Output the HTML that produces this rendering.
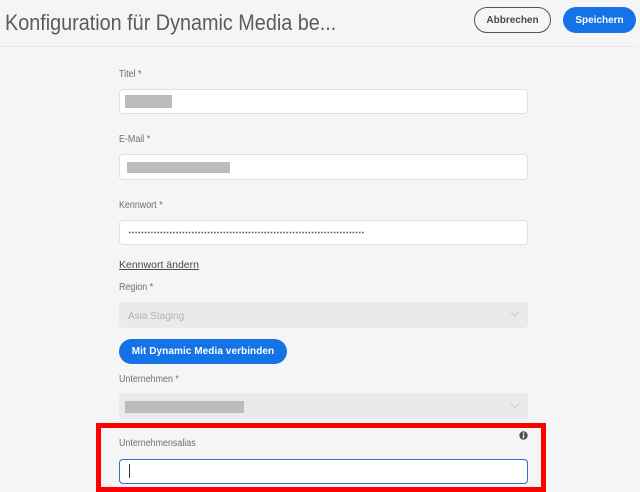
<!DOCTYPE html>
<html lang="de">
<head>
<meta charset="utf-8">
<title>Konfiguration</title>
<style>
html,body{margin:0;padding:0;width:640px;height:492px;overflow:hidden;background:#f5f5f5;font-family:"Liberation Sans",sans-serif;}
div,a,span{position:absolute;box-sizing:border-box;white-space:nowrap;}
.title{left:5px;top:8px;font-size:22.5px;line-height:30px;color:#5c5c5c;transform:scaleX(.88);transform-origin:left center;}
.hr{left:0;top:46px;width:636px;height:1px;background:#e8e8e8;}
.btn{border-radius:13px;font-size:10px;font-weight:bold;text-align:center;}
.label{left:119px;font-size:10px;line-height:12px;color:#6e6e6e;transform:scaleX(.89);transform-origin:left center;}
.input{left:119px;width:409px;background:#fff;border:1px solid #e1e1e1;border-radius:4px;}
.sel{left:119px;width:409px;background:#eaeaea;border-radius:4px;}
.blk{background:#bcbcbc;}
.chev{left:510px;width:10px;height:6px;}
</style>
</head>
<body>
<div class="title">Konfiguration für Dynamic Media be...</div>
<div class="hr"></div>
<div class="btn" style="left:474px;top:7px;width:77px;height:26px;line-height:25px;border:1px solid #555;color:#4b4b4b;">Abbrechen</div>
<div class="btn" style="left:563px;top:7px;width:73px;height:26px;line-height:27px;background:#1473e6;color:#fff;">Speichern</div>

<div class="label" style="top:69px;">Titel *</div>
<div class="input" style="top:89px;height:25px;"></div>
<div class="blk" style="left:125px;top:95px;width:47px;height:13px;"></div>

<div class="label" style="top:134px;">E-Mail *</div>
<div class="input" style="top:154px;height:26px;"></div>
<div class="blk" style="left:127px;top:162px;width:103px;height:11px;"></div>

<div class="label" style="top:200px;">Kennwort *</div>
<div class="input" style="top:220px;height:25px;"></div>
<svg style="position:absolute;left:129px;top:231px;" width="236" height="3"><line x1="0" y1="1.5" x2="236" y2="1.5" stroke="#555" stroke-width="1.6" stroke-dasharray="1.6 1.55"/></svg>

<a style="left:119px;top:259px;font-size:10.5px;line-height:13px;color:#4b4b4b;text-decoration:underline;">Kennwort ändern</a>

<div class="label" style="top:282px;">Region *</div>
<div class="sel" style="top:302px;height:26px;"></div>
<div style="left:128px;top:310px;font-size:10px;line-height:13px;color:#b3b3b3;">Asia Staging</div>
<svg class="chev" style="position:absolute;top:311px;" viewBox="0 0 10 6"><path d="M1 1 L5 5 L9 1" fill="none" stroke="#d3d3d3" stroke-width="1.5"/></svg>

<div class="btn" style="left:119px;top:339px;width:168px;height:25px;line-height:26px;background:#1473e6;color:#fff;letter-spacing:.07px;">Mit Dynamic Media verbinden</div>

<div class="label" style="top:374px;">Unternehmen *</div>
<div class="sel" style="top:393px;height:26px;"></div>
<div class="blk" style="left:125px;top:401px;width:119px;height:12px;"></div>
<svg class="chev" style="position:absolute;top:403px;" viewBox="0 0 10 6"><path d="M1 1 L5 5 L9 1" fill="none" stroke="#d3d3d3" stroke-width="1.5"/></svg>

<div style="left:96px;top:423px;width:450px;height:69px;border:5px solid #ff0000;"></div>
<div class="label" style="top:438px;">Unternehmensalias</div>
<svg style="position:absolute;left:519px;top:431px;" width="9" height="9" viewBox="0 0 9 9"><circle cx="4.5" cy="4.5" r="4.2" fill="#505050"/><rect x="3.8" y="1.5" width="1.4" height="1.4" fill="#fff"/><rect x="3.8" y="3.6" width="1.4" height="3.6" fill="#fff"/></svg>
<div class="input" style="top:459px;height:25px;border:1px solid #2d6fc9;"></div>
<div style="left:129px;top:464px;width:1px;height:14px;background:#333;"></div>
</body>
</html>
